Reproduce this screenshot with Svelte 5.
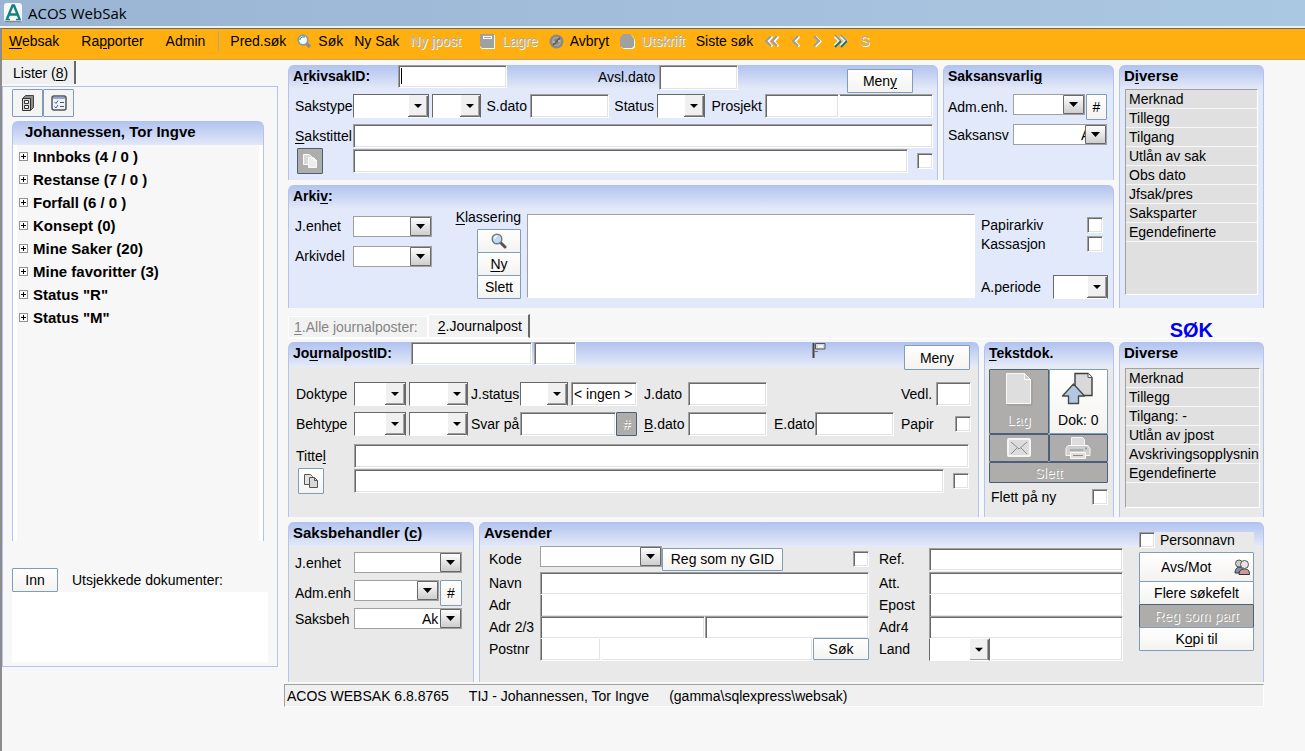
<script>
  const tree = [
    'Innboks (4 / 0 )',
    'Restanse (7 / 0 )',
    'Forfall (6 / 0 )',
    'Konsept (0)',
    'Mine Saker (20)',
    'Mine favoritter (3)',
    'Status "R"',
    'Status "M"'
  ];
  const sakDiverse = ['Merknad', 'Tillegg', 'Tilgang', 'Utlån av sak', 'Obs dato', 'Jfsak/pres', 'Saksparter', 'Egendefinerte'];
  const postDiverse = ['Merknad', 'Tillegg', 'Tilgang: -', 'Utlån av jpost', 'Avskrivingsopplysnin', 'Egendefinerte'];
</script>

{#snippet lens()}
  <svg width="16" height="16" viewBox="0 0 16 16" aria-hidden="true">
    <path d="M9.5 9.5l4.5 4.5" stroke="#555" stroke-width="3" stroke-linecap="round" />
    <circle cx="6" cy="6" r="4.8" fill="#bcdcf6" stroke="#777" stroke-width="1.4" />
    <path d="M3.5 5.5a3 3 0 0 1 3-2.5" stroke="#fff" stroke-width="1.4" fill="none" />
  </svg>
{/snippet}

{#snippet copy(back, front, line)}
  <svg width="16" height="16" viewBox="0 0 16 16" aria-hidden="true">
    <path d="M1.5 1.5h6l2 2v8h-8z" fill={back} stroke={line} />
    <path d="M6.5 4.5h5l3 3v7h-8z" fill={front} stroke={line} />
    <path d="M11.5 4.5v3h3" fill="none" stroke={line} />
  </svg>
{/snippet}

<div class="app">
  <header class="titlebar">
    <svg width="18" height="20" viewBox="0 0 18 20" aria-hidden="true">
      <rect x="0" y="0" width="18" height="19" rx="3" fill="#f6f8f8" />
      <path d="M1 18.500h16" stroke="#8b8b8b" stroke-width="1.500" />
      <path d="M3 16L8.500 2.500h1.500L15.500 16M5.500 11.500h7.500" fill="none" stroke="#15807f" stroke-width="2.400" />
      <path d="M1.500 16.500h4.500M12 16.500h5" stroke="#15807f" stroke-width="1.400" />
    </svg>
    <span>ACOS WebSak</span>
  </header>

  <div class="frame">
    <nav class="toolbar" aria-label="Meny">
      <div class="menus">
        <button><u>W</u>ebsak</button>
        <button>Ra<u>p</u>porter</button>
        <button>Admin</button>
      </div>
      <span class="sep"></span>
      <button>Pred.søk</button>
      <button>
        <svg width="15" height="15" viewBox="0 0 15 15" aria-hidden="true">
          <path d="M8.500 8.500l4.500 4.500" stroke="#8a8f94" stroke-width="3.400" />
          <circle cx="6" cy="6" r="4.800" fill="#f4ffff" stroke="#8d979c" stroke-width="1.800" />
          <path d="M3 6V4.500l2-1.500h3" stroke="#1d8a8a" stroke-width="1" fill="none" />
        </svg>
        Søk
      </button>
      <button>Ny Sak</button>
      <button disabled>Ny jpost</button>
      <button class="lagre" disabled>
        <svg width="16" height="15" viewBox="0 0 16 15" aria-hidden="true">
          <path d="M1 1h14v14H2L0 13V1z" fill="#fff" />
          <path d="M0 0h14v14H2L0 12z" fill="#a0a0a0" />
          <path d="M3 2.500h8.500M3 4.500h8.500M3.500 2v3M11.500 2v3" stroke="#fff" />
        </svg>
        Lagre
      </button>
      <button>
        <svg width="15" height="15" viewBox="0 0 15 15" aria-hidden="true">
          <circle cx="7.500" cy="7.500" r="7" fill="#8a8a88" />
          <circle cx="7.500" cy="7.500" r="4" fill="none" stroke="#b9b3a4" />
          <path d="M4 11l7-7" stroke="#62605c" stroke-width="2" />
          <path d="M4 8h2M9 7h2" stroke="#e8e0cc" />
        </svg>
        Avbryt
      </button>
      <button disabled>
        <svg width="15" height="15" viewBox="0 0 15 15" aria-hidden="true">
          <path d="M4 1h7l2 2 2 3v7l-2 2H4l-3-2V5z" fill="#fff" />
          <path d="M3 0h7l2 2 2 3v7l-2 2H3L0 12V4z" fill="#a0a0a0" />
        </svg>
        Utskrift
      </button>
      <button>Siste søk</button>
      <button class="arrow" aria-label="Første" disabled>
        <svg width="16" height="14" viewBox="0 0 16 14" aria-hidden="true">
          <path d="M8.500 2.500L4 7.500l4.500 5M14.500 2.500L10 7.500l4.500 5" fill="none" stroke="#fff" stroke-width="2" />
          <path d="M7 2L2 7l5 5M13 2L8 7l5 5" fill="none" stroke="#9c9c9c" stroke-width="2" />
        </svg>
      </button>
      <button class="arrow" aria-label="Forrige" disabled>
        <svg width="10" height="14" viewBox="0 0 10 14" aria-hidden="true">
          <path d="M8.500 2.500L4 7.500l4.500 5" fill="none" stroke="#fff" stroke-width="2" />
          <path d="M7 2L2 7l5 5" fill="none" stroke="#9c9c9c" stroke-width="2" />
        </svg>
      </button>
      <button class="arrow" aria-label="Neste" disabled>
        <svg width="10" height="14" viewBox="0 0 10 14" aria-hidden="true">
          <path d="M3.500 2.500l5 5-5 5" fill="none" stroke="#fff" stroke-width="2" />
          <path d="M2 2l5 5-5 5" fill="none" stroke="#9c9c9c" stroke-width="2" />
        </svg>
      </button>
      <button class="arrow" aria-label="Siste">
        <svg width="16" height="14" viewBox="0 0 16 14" aria-hidden="true">
          <path d="M2 2l5 5-5 5M8 2l5 5-5 5" fill="none" stroke="#e8f0f0" stroke-width="3.400" />
          <path d="M2 1l6 6M8 1l6 6" stroke="#8c8c8c" stroke-width="1.600" />
          <path d="M8 7l-6 6M14 7l-6 6" stroke="#1e7470" stroke-width="2" />
        </svg>
      </button>
      <button disabled>S</button>
    </nav>

    <div class="main">
      <aside>
        <button class="lister">Lister (<u>8</u>)</button>
        <div class="sidebox">
          <div class="tools">
            <button class="btn" aria-label="Arkiv">
              <svg width="16" height="18" viewBox="0 0 16 18" aria-hidden="true">
                <path d="M2.500 4.500L5.500 1.500h8v12l-3 3" fill="#8d8d8d" stroke="#444" />
                <path d="M2.500 4.500h8v12h-8z" fill="#d8d8d8" stroke="#333" />
                <path d="M4.500 6.500h4v3h-4zM4.500 11.500h4v3h-4z" fill="#f4f4f4" stroke="#333" />
              </svg>
            </button>
            <button class="btn" aria-label="Oppgaver">
              <svg width="16" height="16" viewBox="0 0 16 16" aria-hidden="true">
                <rect x="1" y="1" width="14" height="14" rx="2" fill="#eef2fb" stroke="#555" stroke-width="1.500" />
                <path d="M2 3h12" stroke="#8fa6dc" stroke-width="2" />
                <path d="M3.500 7l1.500 1.500L7 5.500M3.500 11.500L5 13l2-3" fill="none" stroke="#3a5c9a" />
                <path d="M9 7.500h4M9 11.500h4" stroke="#555" />
              </svg>
            </button>
          </div>
          <section class="user">
            <h2>Johannessen, Tor Ingve</h2>
            <ul>
              {#each tree as item}
                <li>
                  <svg width="9" height="9" viewBox="0 0 9 9" aria-hidden="true">
                    <rect x="0.500" y="0.500" width="8" height="8" fill="#fff" stroke="#919191" />
                    <path d="M2 4.500h5M4.500 2v5" stroke="#000" />
                  </svg>
                  {item}
                </li>
              {/each}
            </ul>
          </section>
          <div class="checked">
            <button class="btn">Inn</button>
            <label for="utsjekket">Utsjekkede dokumenter:</label>
          </div>
          <textarea id="utsjekket" class="plain"></textarea>
        </div>
      </aside>

      <main>
        <div class="case">
          <section class="panel blue sak">
            <div class="head">
              <h2><label for="arkivsakid">A<u>r</u>kivsakID:</label></h2>
              <div class="idfield"><input id="arkivsakid" /><span class="caret"></span></div>
              <label class="avsl" for="avsldato">Avsl.dato</label>
              <input id="avsldato" class="date" />
              <button class="btn meny">Men<u>y</u></button>
            </div>
            <div class="row r-type">
              <label for="sakstype">Sakstype</label>
              <select id="sakstype"></select>
              <select aria-label="Undertype"></select>
              <label class="end" for="sdato">S.dato</label>
              <input id="sdato" />
              <label class="end" for="status">Status</label>
              <select id="status"></select>
              <label class="end" for="prosjekt">Prosjekt</label>
              <div class="joined">
                <input id="prosjekt" />
                <input class="after" aria-label="Prosjektnavn" />
              </div>
            </div>
            <div class="row r-title">
              <label for="sakstittel"><u>S</u>akstittel</label>
              <input id="sakstittel" />
            </div>
            <div class="row r-title2">
              <button class="btn icon off" aria-label="Kopier" disabled>{@render copy('#d9d9d9', '#ededed', '#fafafa')}</button>
              <input aria-label="Sakstittel linje 2" />
              <input type="checkbox" aria-label="Skjermet" />
            </div>
          </section>

          <section class="panel blue ansvar">
            <div class="head"><h2>Saksansvarli<u>g</u></h2></div>
            <div class="row r-adm">
              <label for="admenh">Adm.enh.</label>
              <select id="admenh" class="boxed"></select>
              <button class="btn hash">#</button>
            </div>
            <div class="row r-sb">
              <label for="saksansv">Saksansv</label>
              <select id="saksansv" class="boxed mid"><option>A</option></select>
            </div>
          </section>

          <section class="panel blue diverse">
            <div class="head"><h2>D<u>i</u>verse</h2></div>
            <ul class="list">
              {#each sakDiverse as item}<li>{item}</li>{/each}
            </ul>
          </section>

          <section class="panel blue arkiv">
            <div class="head"><h2>Arki<u>v</u>:</h2></div>
            <div class="arkivgrid">
              <div class="left">
                <div class="row"><label for="jenhet">J.enhet</label><select id="jenhet" class="boxed"></select></div>
                <div class="row"><label for="arkivdel">Arkivdel</label><select id="arkivdel" class="boxed"></select></div>
              </div>
              <div class="klass">
                <label for="klassering"><u>K</u>lassering</label>
                <button class="btn" aria-label="Søk klassering">{@render lens()}</button>
                <button class="btn"><u>N</u>y</button>
                <button class="btn">Slett</button>
              </div>
              <textarea id="klassering"></textarea>
              <div class="right">
                <div class="pair"><label for="papirarkiv">Papirarkiv</label><input id="papirarkiv" type="checkbox" /></div>
                <div class="pair"><label for="kassasjon">Kassasjon</label><input id="kassasjon" type="checkbox" /></div>
                <div class="pair periode"><label for="aperiode">A.periode</label><select id="aperiode"></select></div>
              </div>
            </div>
          </section>
        </div>

        <div class="tabs">
          <button class="tab"><u>1</u>.Alle journalposter:</button>
          <button class="tab current"><u>2</u>.Journalpost</button>
          <strong>SØK</strong>
        </div>

        <div class="post">
          <section class="panel journal">
            <div class="head">
              <h2><label for="jpid">Jo<u>u</u>rnalpostID:</label></h2>
              <input id="jpid" />
              <input class="nr" aria-label="Nummer" />
              <svg class="flag" width="15" height="17" viewBox="0 0 15 17" aria-hidden="true">
                <path d="M1.500 1v15" stroke="#444" stroke-width="2" />
                <path d="M3.500 1.500h9.500v5.500h-9.500z" fill="#d8d8d8" stroke="#555" />
                <path d="M6 4.500h5" stroke="#fff" stroke-width="2" />
                <path d="M2 9.500h4" stroke="#777" />
              </svg>
              <button class="btn meny">Meny</button>
            </div>
            <div class="row r-dok">
              <label for="doktype">Doktype</label>
              <select id="doktype"></select>
              <select aria-label="Dokumentkategori"></select>
              <label for="jstatus">J.stat<u>u</u>s</label>
              <div class="split">
                <select id="jstatus"></select>
                <input value="< ingen >" aria-label="Statustekst" />
              </div>
              <label for="jdato">J.dato</label>
              <input id="jdato" />
              <span></span><span></span>
              <label for="vedl">Vedl.</label>
              <input id="vedl" />
            </div>
            <div class="row r-dok beh">
              <label for="behtype">Beht<u>y</u>pe</label>
              <select id="behtype"></select>
              <select aria-label="Behandlingsmåte"></select>
              <label for="svar">Svar på</label>
              <div class="split svar">
                <input id="svar" />
                <button class="btn off" disabled>#</button>
              </div>
              <label for="bdato"><u>B</u>.dato</label>
              <input id="bdato" />
              <label for="edato">E.dato</label>
              <input id="edato" />
              <label for="papir">Papir</label>
              <input id="papir" class="mark" type="checkbox" />
            </div>
            <div class="row r-title">
              <label for="tittel">Titte<u>l</u></label>
              <input id="tittel" />
            </div>
            <div class="row r-title2">
              <button class="btn icon" aria-label="Kopier tittel">{@render copy('#e3e3e3', '#d8d8d8', '#555')}</button>
              <input aria-label="Tittel linje 2" />
              <input type="checkbox" aria-label="Skjermet tittel" />
            </div>
          </section>

          <section class="panel tekst">
            <div class="head"><h2><u>T</u>ekstdok.</h2></div>
            <div class="docs">
              <button class="btn off big" disabled>
                <svg width="28" height="34" viewBox="0 0 28 34" aria-hidden="true">
                  <path d="M1.500 1.500h18l6 6v24h-24z" fill="#dedede" stroke="#f8f8f8" />
                  <path d="M2 33h25V8" fill="none" stroke="#999" />
                  <path d="M19.500 1.500v6h6z" fill="#cfcfcf" stroke="#fff" />
                </svg>
                Lag
              </button>
              <button class="btn big">
                <svg width="34" height="34" viewBox="0 0 34 34" aria-hidden="true">
                  <path d="M14 1.500h13l4 4v18h-17z" fill="#d9d9d9" stroke="#3d3d3d" stroke-width="1.400" />
                  <path d="M27 1.500v4h4" fill="#fff" stroke="#555" />
                  <path d="M12.500 12L1.500 24h6v7.500h10V24h6z" fill="#b3c6e2" stroke="#484848" stroke-width="1.400" stroke-linejoin="round" />
                </svg>
                Dok: 0
              </button>
              <button class="btn off" aria-label="E-post" disabled>
                <svg width="24" height="20" viewBox="0 0 24 20" aria-hidden="true">
                  <rect x="1" y="1" width="22" height="17" rx="1" fill="#dcdcdc" stroke="#f5f5f5" stroke-width="2" />
                  <path d="M4 4l8 7 8-7M4 16l6-6M20 16l-6-6" fill="none" stroke="#8d8d8d" />
                </svg>
              </button>
              <button class="btn off" aria-label="Skriv ut" disabled>
                <svg width="26" height="24" viewBox="0 0 26 24" aria-hidden="true">
                  <path d="M6.500 1.500h11l2 2v7h-13z" fill="#dcdcdc" stroke="#f5f5f5" />
                  <path d="M3 9.500h20l2 3v7H1v-7z" fill="#cecece" stroke="#f8f8f8" />
                  <path d="M5.500 16.500h15v6h-15z" fill="#dedede" stroke="#f8f8f8" />
                  <path d="M5 14h13M8 19.500h10" stroke="#8c8c8c" />
                  <path d="M20 12.500h2" stroke="#7fae9a" stroke-width="2" />
                </svg>
              </button>
              <button class="btn off wide" disabled>Slett</button>
            </div>
            <div class="pair flett"><label for="flett">Flett på ny</label><input id="flett" type="checkbox" /></div>
          </section>

          <section class="panel diverse">
            <div class="head"><h2>Diverse</h2></div>
            <ul class="list">
              {#each postDiverse as item}<li>{item}</li>{/each}
            </ul>
          </section>
        </div>

        <div class="people">
          <section class="panel behandler">
            <div class="head"><h2>Saksbehandler (<u>c</u>)</h2></div>
            <div class="row r-sb"><label for="bjenhet">J.enhet</label><select id="bjenhet" class="boxed"></select></div>
            <div class="row r-adm">
              <label for="badm">Adm.enh</label>
              <select id="badm" class="boxed"></select>
              <button class="btn hash">#</button>
            </div>
            <div class="row r-sb"><label for="bsaksbeh">Saksbeh</label><select id="bsaksbeh" class="boxed mid"><option>Ak</option></select></div>
          </section>

          <section class="panel avsender">
            <div class="col one">
              <h2>Avsender</h2>
              <div class="line kode">
                <label for="kode">Kode</label>
                <select id="kode" class="boxed"></select>
                <button class="btn">Reg som ny GID</button>
                <input type="checkbox" aria-label="Kode valgt" />
              </div>
              <div class="line"><label for="navn">Navn</label><input id="navn" /></div>
              <div class="line"><label for="adr">Adr</label><input id="adr" class="below" /></div>
              <div class="line"><label for="adr2">Adr 2/3</label><input id="adr2" /><input aria-label="Adr 3" /></div>
              <div class="line"><label for="postnr">Postnr</label><input id="postnr" class="nr below" /><input class="below after" aria-label="Poststed" /><button class="btn sok">Søk</button></div>
            </div>
            <div class="col two">
              <div class="line"><label for="ref">Ref.</label><input id="ref" /></div>
              <div class="line"><label for="att">Att.</label><input id="att" /></div>
              <div class="line"><label for="epost">Epost</label><input id="epost" class="below" /></div>
              <div class="line"><label for="adr4">Adr4</label><input id="adr4" /></div>
              <div class="line"><label for="land">Land</label><select id="land" class="below"></select><input class="below after" aria-label="Landnavn" /></div>
            </div>
            <div class="col three">
              <div class="person"><input id="personnavn" type="checkbox" /><label for="personnavn">Personnavn</label></div>
              <button class="btn avs">
                <span>Avs/Mot</span>
                <svg width="16" height="17" viewBox="0 0 16 17" aria-hidden="true">
                  <path d="M1 14c0-4 2-6 5-6s4 2 4 6z" fill="#7f8fb0" stroke="#333" />
                  <path d="M5 15.500c0-4 2-5.500 5.500-5.500s5 1.500 5 5.500z" fill="#c99" stroke="#333" />
                  <circle cx="5" cy="4.500" r="3.500" fill="#ccc" stroke="#555" />
                  <circle cx="10.500" cy="5.500" r="4" fill="#e6e6e6" stroke="#555" />
                </svg>
              </button>
              <button class="btn">Flere søkefelt</button>
              <button class="btn off" disabled>Reg som part</button>
              <button class="btn">K<u>o</u>pi til</button>
            </div>
          </section>
        </div>

        <footer>
          <span>ACOS WEBSAK 6.8.8765</span>
          <span>TIJ - Johannessen, Tor Ingve</span>
          <span>(gamma\sqlexpress\websak)</span>
        </footer>
      </main>
    </div>
  </div>
</div>

<style>
  :global(body) {
    background: #f7f7f7;
  }
  .app,
  .app :global(*) {
    box-sizing: border-box;
  }
  .app {
    display: flex;
    flex-direction: column;
    min-height: 100vh;
    font: 14px/18px 'Liberation Sans', Arial, sans-serif;
    color: #000;
  }
  h2 {
    margin: 0;
    font-size: 14px;
    line-height: 22px;
    white-space: nowrap;
  }
  ul {
    margin: 0;
    padding: 0;
    list-style: none;
  }
  label {
    white-space: nowrap;
  }
  u {
    text-underline-offset: 2px;
  }
  svg {
    display: block;
    flex: none;
  }
  .titlebar {
    display: flex;
    align-items: center;
    gap: 6px;
    height: 28px;
    padding: 0 4px;
    background: linear-gradient(90deg, #9ab4d3, #abc8e2);
    border-bottom: 2px solid #f0f0f0;
    font-family: 'Open Sans', 'Noto Sans', sans-serif;
    font-size: 15px;
  }
  .frame {
    flex: 1;
    border-top: 1px solid #696969;
    border-left: 2px solid #8c8c8c;
  }

  /* Toolbar */
  .toolbar {
    display: flex;
    align-items: center;
    gap: 11px;
    height: 31px;
    padding: 0 7px 6px;
    background: #ffb010;
    border-bottom: 1px solid #c9a75f;
  }
  .toolbar button {
    display: flex;
    align-items: center;
    gap: 6px;
    padding: 0;
    border: 0;
    background: none;
    font: inherit;
    color: #000;
    white-space: nowrap;
  }
  .toolbar button:has(u) {
    display: block;
  }
  .toolbar button:disabled {
    color: #b5ab96;
    text-shadow: 1px 1px #fff;
  }
  .toolbar .lagre {
    margin-left: 8px;
  }
  .menus {
    display: flex;
    gap: 22px;
  }
  .sep {
    width: 1px;
    height: 20px;
    margin-left: 2px;
    background: #b0a58c;
  }

  /* Shared controls */
  input,
  select,
  textarea {
    min-width: 0;
    width: 100%;
    height: 24px;
    margin: 0;
    padding: 0 2px;
    border: 1px solid;
    border-color: #a0a0a0 #fff #fff #a0a0a0;
    border-radius: 0;
    background-color: #fff;
    box-shadow: inset 1px 1px #696969, inset -1px -1px #e3e3e3;
    font: inherit;
    color: #000;
    appearance: none;
    outline: 0;
    resize: none;
  }
  input[type='checkbox'] {
    flex: none;
    width: 16px;
    height: 16px;
    padding: 0;
  }
  select {
    border-color: #696969 #696969 #fff #696969;
    box-shadow: none;
    background-image: url("data:image/svg+xml,%3Csvg xmlns='http://www.w3.org/2000/svg' width='20' height='22'%3E%3Cpath fill='%23f0f0f0' d='M1 0h19v22H1z'/%3E%3Cpath fill='none' stroke='%23696969' d='M0 21.500h19.500V1'/%3E%3Cpath fill='none' stroke='%23a0a0a0' d='M1 20.500h17.500V1'/%3E%3Cpath d='M6 9h8L10 13z'/%3E%3C/svg%3E");
    background-repeat: no-repeat;
    background-position: right center;
  }
  select.boxed {
    height: 21px;
    padding: 0 21px 0 2px;
    border-color: #a0a0a0;
    background-image: url("data:image/svg+xml,%3Csvg xmlns='http://www.w3.org/2000/svg' width='21' height='19'%3E%3ClinearGradient id='g' x2='0' y2='1'%3E%3Cstop stop-color='%23fff'/%3E%3Cstop offset='1' stop-color='%23ccc'/%3E%3C/linearGradient%3E%3Cpath fill='url(%23g)' stroke='%23696969' d='M.5.5h20v18H.5z'/%3E%3Cpath d='M6 7h9l-4.500 5z'/%3E%3C/svg%3E");
  }
  select.boxed.mid {
    padding-left: 67px;
  }
  textarea {
    border-color: #a0a0a0 #fff #fff #a0a0a0;
    box-shadow: none;
  }
  /* Fields that continue the field above or to the left of them */
  input.below {
    border-top-color: #fff;
    box-shadow: inset 1px 0 #696969, inset -1px -1px #e3e3e3;
  }
  select.below {
    border-top-color: #fff;
  }
  input.after {
    border-left-color: #fff;
    box-shadow: inset 0 1px #696969, inset -1px -1px #e3e3e3;
  }
  input.below.after {
    box-shadow: inset -1px -1px #e3e3e3;
  }
  .btn {
    display: flex;
    align-items: center;
    justify-content: center;
    height: 23px;
    padding: 0;
    border: 1px solid #7f9db9;
    border-radius: 1px;
    background: linear-gradient(#fff, #f4f3f0);
    font: inherit;
    color: #000;
    white-space: nowrap;
  }
  .btn:has(u) {
    display: block;
  }
  .btn.off {
    border-color: #4a6078;
    background: #aeadab;
    color: #a8a8a8;
    text-shadow: 1px 1px #fff;
  }
  .icon {
    width: 26px;
    height: 26px;
  }
  .pair {
    display: flex;
    align-items: center;
    justify-content: space-between;
  }

  /* Sidebar */
  .main {
    display: flex;
    gap: 10px;
    padding: 0 41px 0 0;
  }
  aside {
    flex: none;
    width: 276px;
    padding-top: 1px;
  }
  .lister {
    height: 23px;
    margin: 0 0 2px;
    padding: 0 6px 0 11px;
    border: 0;
    border-right: 2px solid #696969;
    background: #f0f0f0;
    font: inherit;
  }
  .sidebox {
    height: 581px;
    padding: 2px 9px 0;
    border: 1px solid #b4c4ee;
  }
  .tools {
    display: flex;
    margin-bottom: 4px;
  }
  .tools .btn {
    width: 31px;
    height: 28px;
    background: #f4f4f4;
  }
  .user {
    width: 252px;
    height: 420px;
    border: solid #b4c4ee;
    border-width: 0 1px;
    border-radius: 6px 6px 0 0;
    background: linear-gradient(#b0c2ef, #e2e8fa) top / 100% 24px no-repeat, #fff;
  }
  .user h2 {
    height: 24px;
    padding-left: 12px;
    font-size: 15px;
  }
  .user ul {
    height: 396px;
    margin: 0 4px;
    background: #f7f7f7;
    font-size: 15px;
    font-weight: bold;
  }
  .user li {
    display: flex;
    align-items: center;
    gap: 5px;
    height: 23px;
    padding-left: 2px;
  }
  .checked {
    display: flex;
    align-items: center;
    gap: 14px;
    margin-top: 27px;
  }
  .checked .btn {
    width: 46px;
    height: 24px;
  }
  .plain {
    display: block;
    height: 70px;
    border: 0;
  }

  /* Panels */
  main {
    flex: 1;
    min-width: 0;
    padding-top: 5px;
  }
  .panel {
    min-width: 0;
    border: solid #b4c4ee;
    border-width: 0 1px;
    border-radius: 6px 6px 0 0;
    background: linear-gradient(#b0c2ef, #e6ebf8) top / 100% 25px no-repeat, #e9e9e9;
  }
  .panel.blue {
    background-color: #e2e9fa;
  }
  .head {
    display: flex;
    align-items: flex-start;
    padding-left: 4px;
  }
  .head input {
    flex: none;
    height: 23px;
  }
  .meny {
    flex: none;
    width: 66px;
    height: 24px;
  }
  .row {
    display: grid;
    align-items: center;
    column-gap: 3px;
    padding-left: 6px;
  }
  .end {
    justify-self: end;
  }
  .case,
  .post {
    display: grid;
    grid-template-columns: minmax(0, 1fr) 171px 145px;
    gap: 5px;
  }
  .case {
    grid-template-rows: 115px 123px;
  }
  .case .diverse {
    grid-column: 3;
    grid-row: 1 / 3;
  }
  .arkiv {
    grid-column: 1 / 3;
    grid-row: 2;
  }
  .diverse h2,
  .behandler h2,
  .avsender h2 {
    font-size: 15px;
  }

  .sak .head {
    height: 28px;
  }
  .sak h2 {
    width: 105px;
  }
  .idfield {
    position: relative;
    display: flex;
    width: 109px;
  }
  .caret {
    position: absolute;
    top: 3px;
    left: 3px;
    width: 1px;
    height: 16px;
    background: #000;
  }
  .avsl {
    margin: 3px 4px 0 91px;
  }
  .sak .head .date {
    width: 79px;
    height: 25px;
  }
  .sak .meny {
    margin: 4px 24px 0 auto;
  }
  .sak .row {
    padding-right: 4px;
  }
  .r-type {
    grid-template-columns: 55px 76px 49px 43px 79px 42px 48px 54px 1fr;
    height: 25px;
    margin-bottom: 5px;
  }
  .joined {
    display: grid;
    grid-template-columns: 74px 1fr;
  }
  .r-title {
    grid-template-columns: 55px 1fr;
    height: 25px;
  }
  .r-title2 {
    grid-template-columns: 55px 1fr 16px;
    height: 25px;
  }
  .r-title2 .icon {
    margin-left: 2px;
  }
  .r-title2 .icon + input {
    width: calc(100% - 6px);
  }

  .ansvar .head,
  .arkiv .head,
  .tekst .head {
    height: 27px;
  }
  .r-adm {
    column-gap: 1px;
    height: 26px;
  }
  .r-sb {
    column-gap: 1px;
    height: 21px;
  }
  .ansvar {
    grid-column: 2;
  }
  .ansvar .row {
    grid-template-columns: 64px 1fr;
    padding: 0 6px 0 4px;
  }
  .ansvar .r-adm {
    grid-template-columns: 64px 1fr 21px;
    margin: 2px 0 4px;
  }
  .ansvar select {
    align-self: start;
  }
  .hash {
    height: 26px;
  }

  .list {
    height: 206px;
    margin: 0 5px;
    border: 1px solid;
    border-color: #a0a0a0 #fff #fff #a0a0a0;
    background: #e0e0e0;
    overflow: hidden;
  }
  .list li {
    height: 19px;
    padding-left: 3px;
    border-bottom: 1px solid #f7f7f7;
    line-height: 19px;
    white-space: nowrap;
  }
  .case .diverse .head {
    height: 24px;
  }
  .post .list {
    height: 140px;
    margin-right: 3px;
  }
  .post .diverse .head {
    height: 26px;
  }

  .arkivgrid {
    display: grid;
    grid-template-columns: 143px 83px minmax(0, 1fr) 127px;
    column-gap: 6px;
    padding-right: 5px;
  }
  .arkivgrid .left .row {
    grid-template-columns: 55px 1fr;
    height: 30px;
  }
  .arkivgrid .left {
    margin-top: -1px;
  }
  .arkivgrid textarea {
    height: 84px;
    margin-top: 2px;
  }
  .klass {
    display: flex;
    flex-direction: column;
    align-items: flex-end;
  }
  .klass label {
    margin: -3px 0 3px;
    line-height: 17px;
  }
  .klass .btn {
    width: 44px;
    height: 24px;
    margin-bottom: -1px;
  }
  .arkivgrid .right {
    padding-top: 3px;
  }
  .right .pair {
    height: 19px;
    padding-right: 5px;
  }
  .right .periode {
    height: 24px;
    margin-top: 22px;
    padding-right: 0;
  }
  .periode select {
    width: 55px;
  }

  /* Tabs */
  .tabs {
    display: flex;
    align-items: flex-end;
    height: 31px;
    margin-bottom: 3px;
    border-bottom: 1px solid #fff;
  }
  .tab {
    height: 22px;
    padding: 0 9px 0 5px;
    border: 1px solid #fff;
    background: #f2f2f2;
    font: inherit;
    color: #858585;
  }
  .tab.current {
    height: 24px;
    padding: 0 6px 0 9px;
    border-right: 2px solid #696969;
    color: #000;
  }
  .tabs strong {
    margin: 0 51px 0 auto;
    font-size: 20px;
    line-height: 16px;
    color: #0000f0;
  }

  /* Journal post */
  .post {
    grid-template-columns: minmax(0, 1fr) 130px 145px;
    min-height: 175px;
  }
  .journal .head {
    height: 40px;
    padding-right: 8px;
  }
  .journal h2 {
    width: 118px;
  }
  .journal .head input {
    width: 121px;
  }
  .journal .head .nr {
    width: 42px;
    margin-left: 2px;
  }
  .flag {
    margin-left: auto;
  }
  .journal .meny {
    height: 25px;
    margin: 3px 0 0 77px;
  }
  .journal .row {
    padding: 0 9px 0 7px;
  }
  .r-dok {
    grid-template-columns: 55px 52px 59px 46px 117px 45px 79px 42px 79px minmax(36px, 1fr) 35px;
    height: 24px;
    margin-bottom: 6px;
  }
  .journal .beh {
    margin-bottom: 7px;
  }
  .beh .mark {
    margin-left: auto;
  }
  .r-dok > label:nth-of-type(n + 3) {
    padding-left: 4px;
  }
  .split {
    display: grid;
    grid-template-columns: 48px 1fr;
    gap: 3px;
  }
  .svar {
    grid-template-columns: 1fr 21px;
    gap: 0;
  }
  .svar .btn {
    height: 24px;
  }

  .docs {
    display: grid;
    grid-template-columns: 1fr 1fr;
    grid-template-rows: 65px 28px 21px;
    margin: 0 5px 0 4px;
  }
  .docs .btn {
    height: 100%;
  }
  .docs .big {
    flex-direction: column;
    justify-content: flex-start;
    gap: 5px;
    padding-top: 2px;
  }
  .docs .wide {
    grid-column: 1 / 3;
  }
  .flett {
    margin: 5px 5px 0 6px;
  }

  /* People */
  .people {
    display: grid;
    grid-template-columns: 186px minmax(0, 1fr);
    gap: 5px;
    min-height: 160px;
    margin: 5px 0 2px;
  }
  .behandler .row {
    padding: 0 11px 0 6px;
  }
  .behandler .head {
    height: 30px;
  }
  .behandler .r-sb {
    grid-template-columns: 58px 1fr;
  }
  .behandler .r-adm {
    grid-template-columns: 58px 1fr 22px;
    margin: 7px 0 2px;
  }
  .behandler select {
    align-self: start;
  }
  .avsender {
    display: grid;
    grid-template-columns: minmax(0, 389px) minmax(0, 1fr) 115px;
    padding-right: 9px;
  }
  .col {
    display: flex;
    flex-direction: column;
  }
  .one h2 {
    height: 24px;
    padding-left: 4px;
  }
  .line {
    display: flex;
    align-items: center;
    height: 22px;
  }
  .line > label {
    flex: none;
    width: 51px;
    line-height: 22px;
  }
  .one .line {
    padding-left: 9px;
  }
  .one .line.kode,
  .two .line:first-child {
    height: 26px;
  }
  .line input,
  .line select {
    height: 23px;
  }
  .kode select.boxed {
    flex: none;
    width: 122px;
    height: 21px;
    align-self: flex-start;
  }
  .kode .btn {
    flex: none;
    width: 121px;
  }
  .kode input[type='checkbox'] {
    height: 16px;
    margin-left: auto;
  }
  .line .nr {
    flex: none;
    width: 61px;
  }
  .sok {
    flex: none;
    width: 56px;
    height: 22px;
  }
  .two {
    padding: 24px 16px 0 10px;
  }
  .two .line > label {
    width: 50px;
  }
  .two select {
    flex: none;
    width: 61px;
  }
  .three {
    padding-top: 10px;
  }
  .person {
    display: flex;
    align-items: center;
    gap: 5px;
    height: 16px;
    margin-bottom: 4px;
    background: #e9e9e9;
  }
  .three .btn {
    height: 24px;
    margin-bottom: -1px;
  }
  .three .avs {
    height: 30px;
    justify-content: space-between;
    padding: 0 3px 0 21px;
  }
  footer {
    display: flex;
    gap: 20px;
    height: 23px;
    margin-left: -4px;
    padding: 2px;
    border: 1px solid;
    border-color: #a0a0a0 #fff #fff #a0a0a0;
    background: #f0f0f0;
    white-space: nowrap;
  }
</style>
